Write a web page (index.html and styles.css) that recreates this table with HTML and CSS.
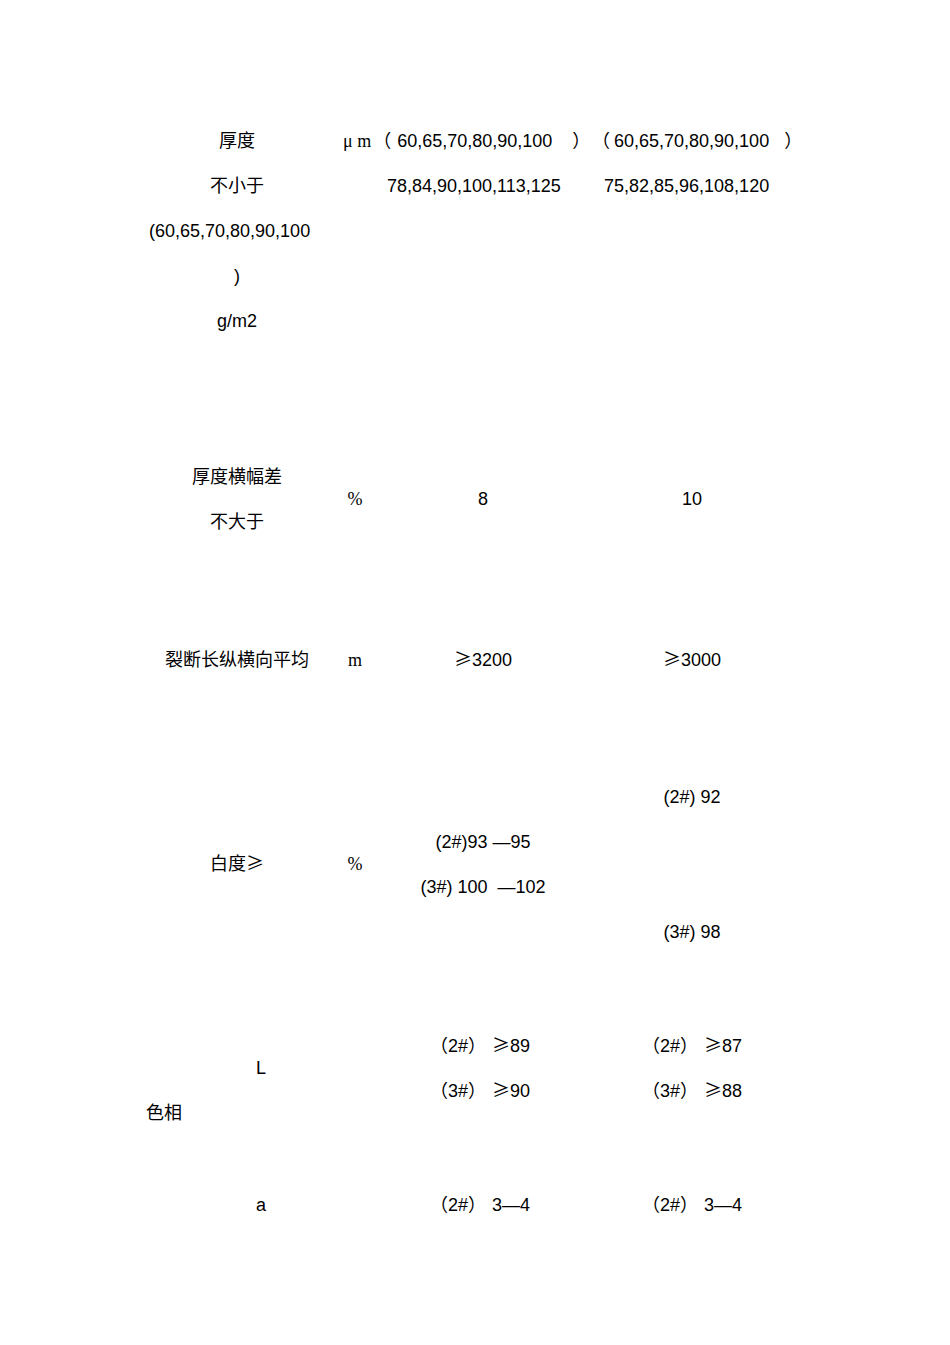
FILE: index.html
```html
<!DOCTYPE html>
<html lang="zh-CN">
<head>
<meta charset="utf-8">
<title>技术指标</title>
<link rel="stylesheet" href="styles.css">
</head>
<body>
<div class="doc">
  <section class="sec sec-a">
    <div class="c1 r1">厚度</div>
    <div class="c1 r3">不小于</div>
    <div class="c1 r5 shift-left">(60,65,70,80,90,100</div>
    <div class="c1 r7">)</div>
    <div class="c1 r9">g/m2</div>
    <div class="c23 r1 al pl9"><span class="serif">μ m</span><span class="op op-wide">（</span>60,65,70,80,90,100&nbsp;&nbsp;&nbsp;&nbsp;）</div>
    <div class="c23 r3 al pl53">78,84,90,100,113,125</div>
    <div class="c4 r1 al pl2"><span class="op">（</span>60,65,70,80,90,100&nbsp;&nbsp;&nbsp;）</div>
    <div class="c4 r3 al pl14">75,82,85,96,108,120</div>
  </section>

  <section class="sec sec-b">
    <div class="c1 r1">厚度横幅差</div>
    <div class="c1 r3">不大于</div>
    <div class="c2 r2 serif">%</div>
    <div class="c3 r2">8</div>
    <div class="c4 r2">10</div>
  </section>

  <section class="sec sec-c">
    <div class="c1 r1">裂断长纵横向平均</div>
    <div class="c2 r1 serif">m</div>
    <div class="c3 r1"><span class="cjk">≥</span>3200</div>
    <div class="c4 r1"><span class="cjk">≥</span>3000</div>
  </section>

  <section class="sec sec-d">
    <div class="c1 r4">白度<span class="cjk">≥</span></div>
    <div class="c2 r4 serif">%</div>
    <div class="c3 r3">(2#)93 —95</div>
    <div class="c3 r5">(3#) 100&nbsp; —102</div>
    <div class="c4 r1">(2#) 92</div>
    <div class="c4 r7">(3#) 98</div>
  </section>

  <section class="sec-e">
    <div class="e1 r4 al pl6">色相</div>
    <div class="e2 r2">L</div>
    <div class="e2 r8">a</div>
    <div class="e4 r1"><span class="tag">（2#）</span><span class="cjk">≥</span>89</div>
    <div class="e4 r3"><span class="tag">（3#）</span><span class="cjk">≥</span>90</div>
    <div class="e4 r8"><span class="tag">（2#）</span>3—4</div>
    <div class="e5 r1"><span class="tag">（2#）</span><span class="cjk">≥</span>87</div>
    <div class="e5 r3"><span class="tag">（3#）</span><span class="cjk">≥</span>88</div>
    <div class="e5 r8"><span class="tag">（2#）</span>3—4</div>
  </section>
</div>
</body>
</html>
```

FILE: styles.css
```css
html, body {
  margin: 0;
  padding: 0;
  background: #ffffff;
}

body {
  color: #000000;
  font-family: "Liberation Sans", "Noto Sans CJK SC", Arial, sans-serif;
  font-size: 18px;
}

.doc {
  width: 950px;
  padding-top: 118.5px;
  padding-bottom: 100px;
}

.sec,
.sec-e {
  display: grid;
  grid-auto-rows: 22.5px;
  padding-left: 140px;
}

.sec {
  grid-template-columns: 194px 42px 214px 204px;
}

.sec-e {
  grid-template-columns: 72px 98px 66px 214px 204px;
  grid-template-rows: repeat(6, 22.5px) 24px 22.5px 22.5px;
  margin-top: 69px;
}

.sec-b { margin-top: 111px; }
.sec-c { margin-top: 93px; }
.sec-d { margin-top: 92px; }

.sec > div,
.sec-e > div {
  line-height: 45px;
  text-align: center;
  white-space: nowrap;
}

.c1 { grid-column: 1; }
.c2 { grid-column: 2; }
.c3 { grid-column: 3; }
.c4 { grid-column: 4; }
.c23 { grid-column: 2 / span 2; }

.e1 { grid-column: 1; }
.e2 { grid-column: 2; }
.e4 { grid-column: 4; padding-right: 6px; }
.e5 { grid-column: 5; }

.r1 { grid-row: 1 / span 2; }
.r2 { grid-row: 2 / span 2; }
.r3 { grid-row: 3 / span 2; }
.r4 { grid-row: 4 / span 2; }
.r5 { grid-row: 5 / span 2; }
.r7 { grid-row: 7 / span 2; }
.r8 { grid-row: 8 / span 2; }
.r9 { grid-row: 9 / span 2; }

.sec > .al,
.sec-e > .al { text-align: left; }

.pl2 { padding-left: 2px; }
.pl6 { padding-left: 6px; }
.pl9 { padding-left: 9px; }
.pl14 { padding-left: 14px; }
.pl53 { padding-left: 53px; }

.sec > .shift-left {
  text-align: left;
  padding-left: 9px;
}

.serif {
  font-family: "Liberation Serif", "Times New Roman", serif;
}

.cjk {
  font-family: "Noto Sans CJK SC", sans-serif;
  line-height: 1;
}

.tag {
  margin-right: 6px;
}

.op {
  margin-right: 4px;
  line-height: 1;
}

.op-wide {
  margin-left: 2px;
  margin-right: 6px;
}
```
